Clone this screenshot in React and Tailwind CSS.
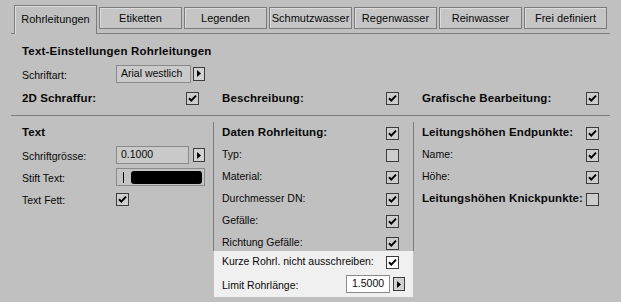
import React from 'react';

// ─── Data ────────────────────────────────────────────────────────────────────

const TABS = ['Rohrleitungen', 'Etiketten', 'Legenden', 'Schmutzwasser', 'Regenwasser', 'Reinwasser', 'Frei definiert'];

const DATEN = [
  { label: 'Daten Rohrleitung:', bold: true, checked: true },
  { label: 'Typ:', checked: false },
  { label: 'Material:', checked: true },
  { label: 'Durchmesser DN:', checked: true },
  { label: 'Gefälle:', checked: true },
  { label: 'Richtung Gefälle:', checked: true },
];

const HOEHEN = [
  { label: 'Leitungshöhen Endpunkte:', bold: true, checked: true },
  { label: 'Name:', checked: true },
  { label: 'Höhe:', checked: true },
  { label: 'Leitungshöhen Knickpunkte:', bold: true, checked: false },
];

// ─── Controls ────────────────────────────────────────────────────────────────

function Check({ checked, white }) {
  return (
    <div className={`w-[13px] h-[13px] shrink-0 border border-[#3c3c3c] ${white ? 'bg-white' : 'bg-[#cdcdcd]'}`}>
      {checked && (
        <svg width="11" height="11" viewBox="0 0 11 11">
          <path d="M2 5.2 L4.3 7.6 L9 2.6" fill="none" stroke="#000" strokeWidth="2" />
        </svg>
      )}
    </div>
  );
}

function Arrow() {
  return (
    <div className="w-[12px] h-[14px] shrink-0 border border-[#3c3c3c] bg-[#d2d2d2] flex items-center justify-center">
      <svg width="4" height="7" viewBox="0 0 4 7">
        <path d="M0 0 L4 3.5 L0 7 Z" fill="#000" />
      </svg>
    </div>
  );
}

function Label({ bold, children }) {
  return (
    <span className={bold ? 'text-[11.5px] font-bold tracking-[0.1px]' : 'text-[10.5px]'}>{children}</span>
  );
}

function CheckRow({ label, bold, checked, white }) {
  return (
    <div className="h-[22px] flex items-center justify-between">
      <Label bold={bold}>{label}</Label>
      <Check checked={checked} white={white} />
    </div>
  );
}

// ─── Main ────────────────────────────────────────────────────────────────────

export default function App() {
  return (
    <div className="w-[621px] h-[302px] bg-[#c0c0c0] text-[#080808] overflow-hidden" style={{ fontFamily: '"Liberation Sans", Arial, sans-serif' }}>
      {/* Tabs */}
      <div className="mt-[5px] mx-[11px] h-[29px] border-b border-[#7c7c7c] flex gap-[2px] pl-[3px]">
        {TABS.map((t, i) =>
          i === 0 ? (
            <div key={t} className="w-[83px] h-[29px] border-l border-t border-r border-[#7c7c7c] bg-[#c0c0c0] shadow-[inset_1px_1px_0_#dedede] flex items-center justify-center text-[11px] pb-[2px]">
              {t}
            </div>
          ) : (
            <div key={t} className="w-[83px] h-[22px] mt-[2px] border border-[#7c7c7c] bg-[#c5c5c5] shadow-[inset_1px_1px_0_#dcdcdc] flex items-center justify-center text-[11px]">
              {t}
            </div>
          )
        )}
      </div>

      {/* Text-Einstellungen */}
      <div className="mt-[8px] pl-[22px] h-[20px] flex items-center">
        <span className="text-[11.5px] font-bold tracking-[0.2px]">Text-Einstellungen Rohrleitungen</span>
      </div>
      <div className="pl-[22px] h-[23px] flex items-center">
        <div className="w-[94px]"><Label>Schriftart:</Label></div>
        <div className="w-[75px] h-[18px] border border-[#8a8a8a] bg-[#cacaca] flex items-center pl-[4px] text-[10.5px]">Arial westlich</div>
        <div className="ml-[2px]"><Arrow /></div>
      </div>

      {/* Top checks */}
      <div className="ml-[13px] flex h-[27px] items-center">
        <div className="w-[200px] pl-[9px] pr-[14px]"><CheckRow label="2D Schraffur:" bold checked /></div>
        <div className="w-[200px] pl-[9px] pr-[14px]"><CheckRow label="Beschreibung:" bold checked /></div>
        <div className="w-[208px] pl-[9px] pr-[22px]"><CheckRow label="Grafische Bearbeitung:" bold checked /></div>
      </div>

      <div className="mt-[3px] mx-[11px] h-px bg-[#7c7c7c]" />

      {/* Lower columns */}
      <div className="ml-[13px] flex">
        <div className="w-[200px] pl-[9px] pt-[6px]">
          <div className="h-[22px] flex items-center"><Label bold>Text</Label></div>
          <div className="h-[22px] flex items-center">
            <div className="w-[94px]"><Label>Schriftgrösse:</Label></div>
            <div className="w-[73px] h-[18px] border border-[#8a8a8a] bg-[#c9c9c9] flex items-center pl-[4px] text-[10.5px]">0.1000</div>
            <div className="ml-[4px]"><Arrow /></div>
          </div>
          <div className="h-[22px] flex items-center">
            <div className="w-[94px]"><Label>Stift Text:</Label></div>
            <div className="w-[89px] h-[18px] border border-[#8a8a8a] bg-[#c4c4c4] flex items-center pl-[6px] gap-[7px]">
              <div className="w-px h-[11px] bg-black" />
              <div className="w-[71px] h-[13px] rounded-[3px] bg-black" />
            </div>
          </div>
          <div className="h-[22px] flex items-center">
            <div className="w-[94px]"><Label>Text Fett:</Label></div>
            <Check checked />
          </div>
        </div>

        <div className="w-[201px]">
          <div className="mt-[9px] h-[129px] border-x border-[#7c7c7c] pl-[8px] pr-[14px]">
            <div className="-mt-[3px]">
              {DATEN.map(r => <CheckRow key={r.label} {...r} />)}
            </div>
          </div>
          <div className="mx-px h-[46px] bg-[#f0f0f0] pl-[8px] pr-[14px]">
            <CheckRow label="Kurze Rohrl. nicht ausschreiben:" checked white />
            <div className="h-[22px] flex items-center -mr-[6px]">
              <div className="flex-1"><Label>Limit Rohrlänge:</Label></div>
              <div className="w-[44px] h-[18px] border border-[#8a8a8a] bg-white flex items-center pl-[5px] text-[10.5px]">1.5000</div>
              <div className="ml-[3px]"><Arrow /></div>
            </div>
          </div>
        </div>

        <div className="w-[207px] pl-[8px] pr-[22px] pt-[6px]">
          {HOEHEN.map(r => <CheckRow key={r.label} {...r} />)}
        </div>
      </div>
    </div>
  );
}
